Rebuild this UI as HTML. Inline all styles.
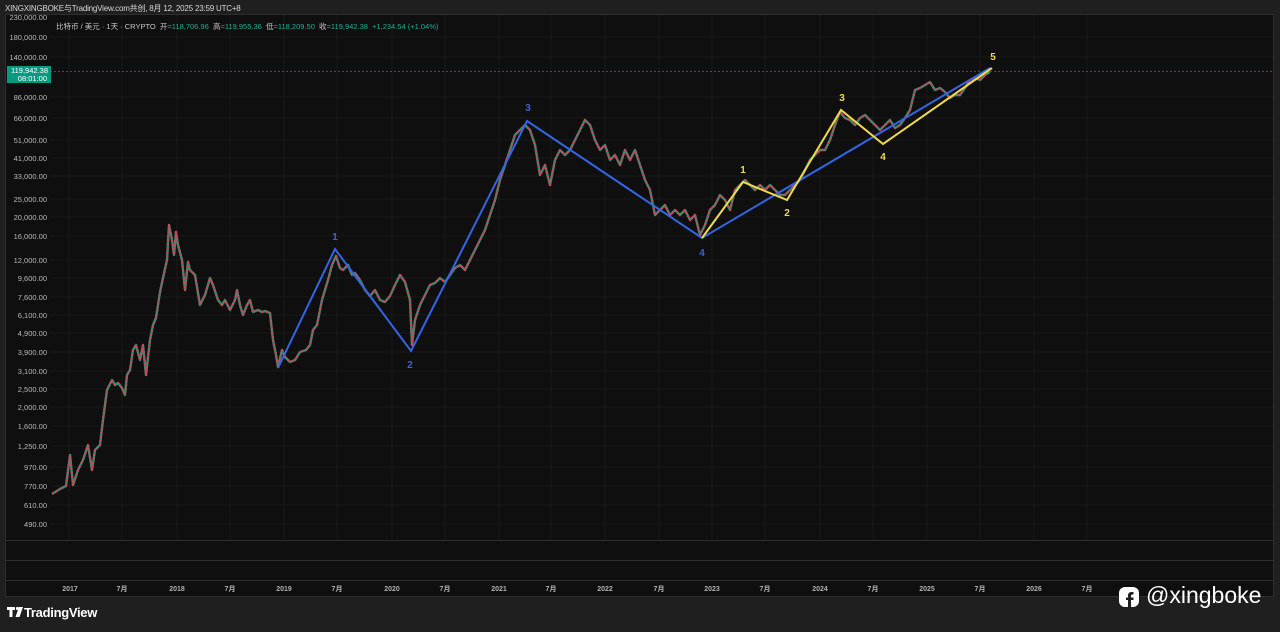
<!DOCTYPE html>
<html><head><meta charset="utf-8"><style>
html,body{margin:0;padding:0;background:#1f1f1f;width:1280px;height:632px;overflow:hidden;font-family:"Liberation Sans","Noto Sans CJK SC",sans-serif}
.t{position:absolute;white-space:nowrap}
</style></head><body>
<div class="t" style="left:5px;top:3px;font-size:8px;color:#d8d8d8;letter-spacing:-0.2px">XINGXINGBOKE与TradingView.com共创, 8月 12, 2025 23:59 UTC+8</div>
<svg style="position:absolute;left:0;top:0" width="1280" height="632">
<defs>
<polyline id="p" points="52,494 60,489 66,486 70,455 73,485 78,470 83,460 88,445 92,470 95,450 100,445 103,420 107,390 112,380 115,385 118,383 122,388 125,395 127,375 130,370 133,350 136,345 140,360 143,345 146,375 150,340 153,325 156,318 160,292 163,278 167,260 169,225 172,240 174,255 176,232 178,245 182,260 185,290 188,262 190,270 195,275 200,305 205,295 210,278 213,285 218,300 222,305 225,300 230,310 235,300 237,290 240,305 243,315 247,305 250,300 253,312 258,310 262,312 265,311 270,313 273,340 276,355 278,367 282,350 285,357 290,362 295,360 300,352 306,350 310,345 313,330 317,325 322,300 325,290 328,280 332,265 336,256 340,268 343,270 348,265 352,275 355,273 360,280 365,290 370,296 375,290 380,300 385,302 390,296 395,285 400,275 405,282 410,300 412,345 415,320 420,305 425,295 430,285 435,283 440,278 445,282 450,275 455,268 460,265 465,270 470,260 475,250 480,240 485,230 490,215 495,200 500,180 505,165 510,150 515,135 520,130 525,125 530,130 535,145 540,175 545,165 550,185 555,160 560,150 565,155 570,150 575,140 580,130 585,120 590,125 595,140 600,150 605,145 610,160 615,155 620,165 625,150 630,160 635,150 640,165 645,180 650,190 655,215 660,210 665,205 670,215 675,210 680,215 685,210 690,220 695,215 700,235 705,225 710,210 715,205 720,195 725,200 730,210 735,190 740,185 745,180 750,185 755,190 760,185 765,190 770,185 775,190 780,195 785,195 790,190 795,185 800,180 805,170 810,160 815,155 820,150 825,150 830,140 835,125 840,112 845,118 850,120 855,125 860,118 865,115 870,120 875,125 880,130 885,125 890,120 895,128 900,125 905,118 910,110 915,90 920,88 925,85 930,82 935,90 940,88 945,92 950,98 955,95 960,95 965,88 970,80 975,78 980,80 985,75 990,72"/>
</defs>
<rect x="5.5" y="14.5" width="1268" height="582" fill="#0f0f0f" stroke="#2e2e2e"/>
<g stroke="#1a1a1a" stroke-width="1">
<line x1="69" y1="15" x2="69" y2="540"/><line x1="122" y1="15" x2="122" y2="540"/><line x1="177" y1="15" x2="177" y2="540"/><line x1="230" y1="15" x2="230" y2="540"/><line x1="284" y1="15" x2="284" y2="540"/><line x1="337" y1="15" x2="337" y2="540"/><line x1="392" y1="15" x2="392" y2="540"/><line x1="445" y1="15" x2="445" y2="540"/><line x1="499" y1="15" x2="499" y2="540"/><line x1="551" y1="15" x2="551" y2="540"/><line x1="605" y1="15" x2="605" y2="540"/><line x1="659" y1="15" x2="659" y2="540"/><line x1="712" y1="15" x2="712" y2="540"/><line x1="765" y1="15" x2="765" y2="540"/><line x1="820" y1="15" x2="820" y2="540"/><line x1="873" y1="15" x2="873" y2="540"/><line x1="927" y1="15" x2="927" y2="540"/><line x1="980" y1="15" x2="980" y2="540"/><line x1="1034" y1="15" x2="1034" y2="540"/><line x1="1087" y1="15" x2="1087" y2="540"/>
<line x1="50" y1="37" x2="1273" y2="37"/><line x1="50" y1="57" x2="1273" y2="57"/><line x1="50" y1="97" x2="1273" y2="97"/><line x1="50" y1="118" x2="1273" y2="118"/><line x1="50" y1="140" x2="1273" y2="140"/><line x1="50" y1="158" x2="1273" y2="158"/><line x1="50" y1="176" x2="1273" y2="176"/><line x1="50" y1="199" x2="1273" y2="199"/><line x1="50" y1="217" x2="1273" y2="217"/><line x1="50" y1="236" x2="1273" y2="236"/><line x1="50" y1="260" x2="1273" y2="260"/><line x1="50" y1="278" x2="1273" y2="278"/><line x1="50" y1="297" x2="1273" y2="297"/><line x1="50" y1="315" x2="1273" y2="315"/><line x1="50" y1="333" x2="1273" y2="333"/><line x1="50" y1="352" x2="1273" y2="352"/><line x1="50" y1="371" x2="1273" y2="371"/><line x1="50" y1="389" x2="1273" y2="389"/><line x1="50" y1="407" x2="1273" y2="407"/><line x1="50" y1="426" x2="1273" y2="426"/><line x1="50" y1="446" x2="1273" y2="446"/><line x1="50" y1="467" x2="1273" y2="467"/><line x1="50" y1="486" x2="1273" y2="486"/><line x1="50" y1="505" x2="1273" y2="505"/><line x1="50" y1="524" x2="1273" y2="524"/>
</g>
<g stroke="#2e2e2e"><line x1="5" y1="540.5" x2="1273" y2="540.5"/><line x1="5" y1="560.5" x2="1273" y2="560.5"/><line x1="5" y1="580.5" x2="1273" y2="580.5"/></g>
<line x1="50" y1="71.5" x2="1273" y2="71.5" stroke="#0b6b5a" stroke-dasharray="2,2"/>
<g fill="none" stroke-linejoin="round">
<use href="#p" stroke="#23907a" stroke-width="2.4"/>
<use href="#p" stroke="#e0404e" stroke-width="2.2" stroke-dasharray="2,2"/>
</g>
<polyline fill="none" stroke="#3366e6" stroke-width="2" points="278,368 335,249 411,351 527,121 702,238 990,68"/>
<polyline fill="none" stroke="#f2d94a" stroke-width="2" points="702,238 743,182 787,200 841,110 883,144 992,68"/>
<g font-size="10" text-anchor="middle" font-weight="bold" font-family="Liberation Sans,sans-serif">
<text x="335" y="240" fill="#3a63d6">1</text><text x="410" y="368" fill="#3a63d6">2</text><text x="528" y="111" fill="#3a63d6">3</text><text x="702" y="256" fill="#3a63d6">4</text>
<text x="743" y="173" fill="#f2d94a">1</text><text x="787" y="216" fill="#f2d94a">2</text><text x="842" y="101" fill="#f2d94a">3</text><text x="883" y="160" fill="#f2d94a">4</text><text x="993" y="60" fill="#f2d94a">5</text>
</g>
<g font-size="7.5" fill="#b8b8b8" text-anchor="end" font-family="Liberation Sans,sans-serif">
<text x="47" y="20">230,000.00</text><text x="47" y="40">180,000.00</text><text x="47" y="60">140,000.00</text><text x="47" y="100">86,000.00</text><text x="47" y="121">66,000.00</text><text x="47" y="143">51,000.00</text><text x="47" y="161">41,000.00</text><text x="47" y="179">33,000.00</text><text x="47" y="202">25,000.00</text><text x="47" y="220">20,000.00</text><text x="47" y="239">16,000.00</text><text x="47" y="263">12,000.00</text><text x="47" y="281">9,600.00</text><text x="47" y="300">7,600.00</text><text x="47" y="318">6,100.00</text><text x="47" y="336">4,900.00</text><text x="47" y="355">3,900.00</text><text x="47" y="374">3,100.00</text><text x="47" y="392">2,500.00</text><text x="47" y="410">2,000.00</text><text x="47" y="429">1,600.00</text><text x="47" y="449">1,250.00</text><text x="47" y="470">970.00</text><text x="47" y="489">770.00</text><text x="47" y="508">610.00</text><text x="47" y="527">490.00</text>
</g>
<rect x="7" y="66" width="44" height="17" fill="#089981"/>
<g font-size="7.5" fill="#fff" text-anchor="end"><text x="48" y="73">119,942.38</text><text x="47" y="81">08:01:00</text></g>
<g font-size="7" fill="#b0b0b0" text-anchor="middle" font-weight="bold">
<text x="70" y="591">2017</text><text x="122" y="591">7月</text><text x="177" y="591">2018</text><text x="230" y="591">7月</text><text x="284" y="591">2019</text><text x="337" y="591">7月</text><text x="392" y="591">2020</text><text x="445" y="591">7月</text><text x="499" y="591">2021</text><text x="551" y="591">7月</text><text x="605" y="591">2022</text><text x="659" y="591">7月</text><text x="712" y="591">2023</text><text x="765" y="591">7月</text><text x="820" y="591">2024</text><text x="873" y="591">7月</text><text x="927" y="591">2025</text><text x="980" y="591">7月</text><text x="1034" y="591">2026</text><text x="1087" y="591">7月</text>
</g>
<g fill="#fff"><path d="M7,607 h8 v3 h-2.5 v7 h-3 v-7 h-2.5z"/><circle cx="17.5" cy="608.5" r="1.6"/><path d="M19,607 h4 l-3.5,10 h-4z"/></g>
<rect x="1119" y="587" width="20" height="20" rx="6" fill="#fff"/>
<path d="M1131,608 v-8 h2.5 v-2.5 h-2.5 v-1.5 c0,-1 .5,-1.5 1.5,-1.5 h1 v-2.5 h-2 c-2.5,0 -3.5,1.5 -3.5,3.5 v2 h-2 v2.5 h2 v9z" fill="#1f1f1f"/>
</svg>
<div class="t" style="left:56px;top:21px;font-size:7.5px;color:#c8c8c8">比特币 / 美元 · 1天 · CRYPTO &nbsp;开<span style="color:#22ab94">=118,706.96</span> &nbsp;高<span style="color:#22ab94">=119,955.36</span> &nbsp;低<span style="color:#22ab94">=118,209.50</span> &nbsp;收<span style="color:#22ab94">=119,942.38 &nbsp;+1,234.54 (+1.04%)</span></div>
<div class="t" style="left:24px;top:605px;font-size:13px;color:#fff;font-weight:bold;letter-spacing:-0.3px">TradingView</div>
<div class="t" style="left:1146px;top:582px;font-size:23px;color:#fff">@xingboke</div>
</body></html>
